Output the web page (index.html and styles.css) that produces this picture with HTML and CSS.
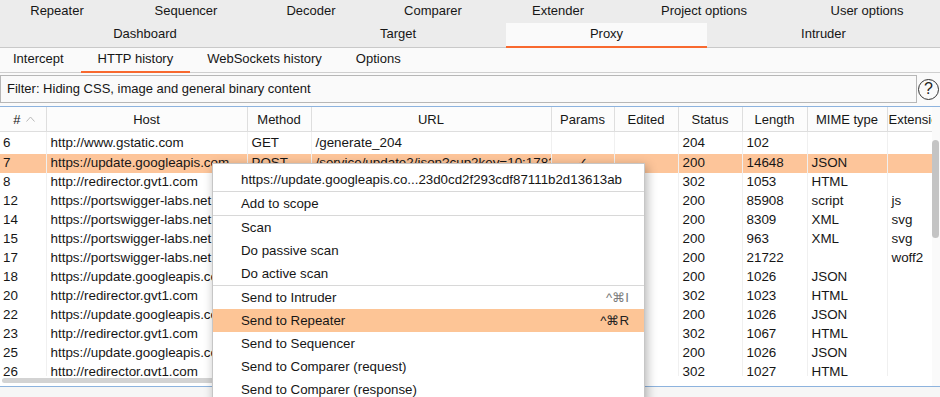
FILE: index.html
```html
<!DOCTYPE html>
<html lang="en">
<head>
  <meta charset="UTF-8" />
  <meta name="viewport" content="width=device-width, initial-scale=1.0" />
  <title>Burp Suite - Proxy - HTTP history</title>
  <link rel="stylesheet" href="styles.css">
</head>
<body>
  <div class="tabs">
    <div class="tabrow tabrow-top">
      <div class="tab">Repeater</div>
      <div class="tab">Sequencer</div>
      <div class="tab">Decoder</div>
      <div class="tab">Comparer</div>
      <div class="tab">Extender</div>
      <div class="tab">Project options</div>
      <div class="tab">User options</div>
    </div>
    <div class="tabrow tabrow-main">
      <div class="tab">Dashboard</div>
      <div class="tab">Target</div>
      <div class="tab active">Proxy</div>
      <div class="tab">Intruder</div>
    </div>
  </div>

  <div class="subtabs">
    <div class="subtab">Intercept</div>
    <div class="subtab active">HTTP history</div>
    <div class="subtab">WebSockets history</div>
    <div class="subtab">Options</div>
  </div>

  <div class="filter-row">
    <div class="filter">Filter: Hiding CSS, image and general binary content</div>
    <div class="help">?</div>
  </div>

  <div class="history">
    <div class="viewport">
      <div class="rows-area">
        <table>
          <colgroup>
            <col style="width: 46px"><col style="width: 201px"><col style="width: 64px"><col style="width: 240px">
            <col style="width: 63px"><col style="width: 64px"><col style="width: 64px"><col style="width: 65px">
            <col style="width: 80px"><col style="width: 80px">
          </colgroup>
          <thead>
            <tr>
              <th><span class="sort"># <svg width="9" height="6" viewBox="0 0 9 6"><polyline points="0.5,5.5 4.5,1 8.5,5.5" fill="none" stroke="#b9b9b9" stroke-width="1"/></svg></span></th>
              <th>Host</th>
              <th>Method</th>
              <th>URL</th>
              <th>Params</th>
              <th>Edited</th>
              <th>Status</th>
              <th>Length</th>
              <th>MIME type</th>
              <th class="clip">Extension</th>
            </tr>
          </thead>
          <tbody>
            <tr class="first"><td class="num">6</td><td>http://www.gstatic.com</td><td>GET</td><td>/generate_204</td><td></td><td></td><td>204</td><td>102</td><td></td><td></td></tr>
            <tr class="selected"><td class="num">7</td><td>https://update.googleapis.com</td><td>POST</td><td>/service/update2/json?cup2key=10:1783021</td><td class="check">✓</td><td></td><td>200</td><td>14648</td><td>JSON</td><td></td></tr>
            <tr><td class="num">8</td><td>http://redirector.gvt1.com</td><td>GET</td><td>/edgedl/release2/chrome_compone</td><td></td><td></td><td>302</td><td>1053</td><td>HTML</td><td></td></tr>
            <tr><td class="num">12</td><td>https://portswigger-labs.net</td><td>GET</td><td>/xss/xss.js</td><td></td><td></td><td>200</td><td>85908</td><td>script</td><td>js</td></tr>
            <tr><td class="num">14</td><td>https://portswigger-labs.net</td><td>GET</td><td>/images/logo.svg</td><td></td><td></td><td>200</td><td>8309</td><td>XML</td><td>svg</td></tr>
            <tr><td class="num">15</td><td>https://portswigger-labs.net</td><td>GET</td><td>/images/icon.svg</td><td></td><td></td><td>200</td><td>963</td><td>XML</td><td>svg</td></tr>
            <tr><td class="num">17</td><td>https://portswigger-labs.net</td><td>GET</td><td>/fonts/font.woff2</td><td></td><td></td><td>200</td><td>21722</td><td></td><td>woff2</td></tr>
            <tr><td class="num">18</td><td>https://update.googleapis.com</td><td>POST</td><td>/service/update2/json</td><td>✓</td><td></td><td>200</td><td>1026</td><td>JSON</td><td></td></tr>
            <tr><td class="num">20</td><td>http://redirector.gvt1.com</td><td>GET</td><td>/edgedl/release2/chrome_compone</td><td></td><td></td><td>302</td><td>1023</td><td>HTML</td><td></td></tr>
            <tr><td class="num">22</td><td>https://update.googleapis.com</td><td>POST</td><td>/service/update2/json</td><td>✓</td><td></td><td>200</td><td>1026</td><td>JSON</td><td></td></tr>
            <tr><td class="num">23</td><td>http://redirector.gvt1.com</td><td>GET</td><td>/edgedl/release2/chrome_compone</td><td></td><td></td><td>302</td><td>1067</td><td>HTML</td><td></td></tr>
            <tr><td class="num">25</td><td>https://update.googleapis.com</td><td>POST</td><td>/service/update2/json</td><td>✓</td><td></td><td>200</td><td>1026</td><td>JSON</td><td></td></tr>
            <tr><td class="num">26</td><td>http://redirector.gvt1.com</td><td>GET</td><td>/edgedl/release2/chrome_compone</td><td></td><td></td><td>302</td><td>1027</td><td>HTML</td><td></td></tr>
          </tbody>
        </table>
      </div>
      <div class="hscroll"><div class="hthumb"></div></div>
    </div>
    <div class="vscroll"><div class="vthumb"></div></div>
  </div>

  <div class="menu">
    <div class="menu-item">https://update.googleapis.co...23d0cd2f293cdf87111b2d13613ab</div>
    <div class="menu-sep"></div>
    <div class="menu-item">Add to scope</div>
    <div class="menu-sep"></div>
    <div class="menu-item">Scan</div>
    <div class="menu-item">Do passive scan</div>
    <div class="menu-item">Do active scan</div>
    <div class="menu-sep"></div>
    <div class="menu-item">Send to Intruder <span class="key">^⌘I</span></div>
    <div class="menu-item hover">Send to Repeater <span class="key">^⌘R</span></div>
    <div class="menu-item">Send to Sequencer</div>
    <div class="menu-item">Send to Comparer (request)</div>
    <div class="menu-item">Send to Comparer (response)</div>
  </div>
</body>
</html>
```

FILE: styles.css
```css
body {
  margin: 0;
  width: 940px;
  height: 397px;
  overflow: hidden;
  position: relative;
  font-family: "Liberation Sans", Arial, sans-serif;
  font-size: 13px;
  color: #161616;
  background: #f6f6f6;
}
.tabs {
  background: #ececec;
}
.tabrow {
  display: grid;
}
.tabrow-top {
  grid-template-columns: 114px 144px 106px 138px 112px 180px 1fr;
  height: 23px;
  line-height: 22px;
}
.tabrow-main {
  grid-template-columns: 290px 216px 201px 1fr;
  height: 24px;
  line-height: 22px;
  border-bottom: 1px solid #c9c9c9;
}
.tab {
  text-align: center;
  white-space: nowrap;
}
.tab.active {
  background: #fafafa;
  position: relative;
}
.tab.active::after {
  content: "";
  position: absolute;
  left: 0;
  right: 0;
  bottom: -1px;
  height: 2px;
  background: #f8692f;
}
.subtabs {
  display: flex;
  height: 24px;
  line-height: 22px;
  background: #fafafa;
  border-bottom: 1px solid #cfcfcf;
}
.subtab {
  padding: 0 17px;
  position: relative;
}
.subtab:first-child {
  padding-left: 13px;
}
.subtab.active::after {
  content: "";
  position: absolute;
  left: 0;
  right: 0;
  bottom: -1px;
  height: 2px;
  background: #f8692f;
}
.filter-row {
  display: flex;
  align-items: center;
  background: #fafafa;
  padding: 2px 0 3px;
}
.filter {
  box-sizing: border-box;
  flex: 0 0 917px;
  height: 28px;
  line-height: 26px;
  padding-left: 6px;
  border: 1px solid #b7b7b7;
  background: #fafafa;
}
.help {
  box-sizing: border-box;
  width: 21px;
  height: 21px;
  margin-left: 1px;
  border: 1.5px solid #333;
  border-radius: 50%;
  text-align: center;
  line-height: 18px;
  font-size: 16px;
  color: #222;
}
.history {
  display: flex;
  height: 279px;
  background: #fff;
  border-top: 1px solid #8db3de;
  border-bottom: 1px solid #8db3de;
}
.viewport {
  width: 932px;
  overflow: hidden;
}
.rows-area {
  height: 269px;
  overflow: hidden;
}
table {
  border-collapse: collapse;
  table-layout: fixed;
  width: 967px;
}
th {
  height: 24px;
  padding: 0;
  font-weight: normal;
  text-align: center;
  white-space: nowrap;
  overflow: hidden;
  background: #fcfcfc;
  border-right: 1px solid #dedede;
  border-bottom: 1px solid #dedede;
}
th.clip {
  text-align: left;
  padding-left: 1px;
}
.sort {
  display: inline-flex;
  align-items: center;
  gap: 6px;
  margin-left: 3px;
}
td {
  height: 19px;
  line-height: 18px;
  padding: 0 4px;
  font-size: 13.4px;
  vertical-align: top;
  white-space: nowrap;
  overflow: hidden;
  border-right: 1px solid #f0f0f0;
}
td.num {
  padding-left: 3px;
}
td.check {
  text-align: center;
}
tr.first td {
  height: 22px;
  line-height: 22px;
  vertical-align: middle;
}
tr.selected td {
  background: #fdc59a;
}
.hscroll {
  height: 10px;
  padding-top: 2px;
  box-sizing: border-box;
  background: #fff;
}
.hthumb {
  width: 600px;
  height: 5px;
  margin-left: 2px;
  border-radius: 3px;
  background: #d3d3d3;
}
.vscroll {
  width: 8px;
  padding-top: 33px;
  box-sizing: border-box;
  background: #fafafa;
}
.vthumb {
  width: 7px;
  height: 98px;
  border-radius: 4px;
  background: #c4c4c4;
}
/* context menu over the table */
.menu {
  position: absolute;
  left: 212px;
  top: 163px;
  width: 433px;
  box-sizing: border-box;
  padding: 4px 0;
  font-size: 13.3px;
  background: #fff;
  border: 1px solid #c6c6c6;
  box-shadow: 2px 3px 10px rgba(0, 0, 0, 0.3);
}
.menu-item {
  display: flex;
  justify-content: space-between;
  height: 23px;
  line-height: 23px;
  padding: 0 15px 0 28px;
  white-space: nowrap;
}
.menu-item.hover {
  background: #fdc596;
}
.menu-sep {
  height: 1px;
  background: #d8d8d8;
}
.key {
  color: #7a7a7a;
}
.menu-item.hover .key {
  color: #222;
}
```
